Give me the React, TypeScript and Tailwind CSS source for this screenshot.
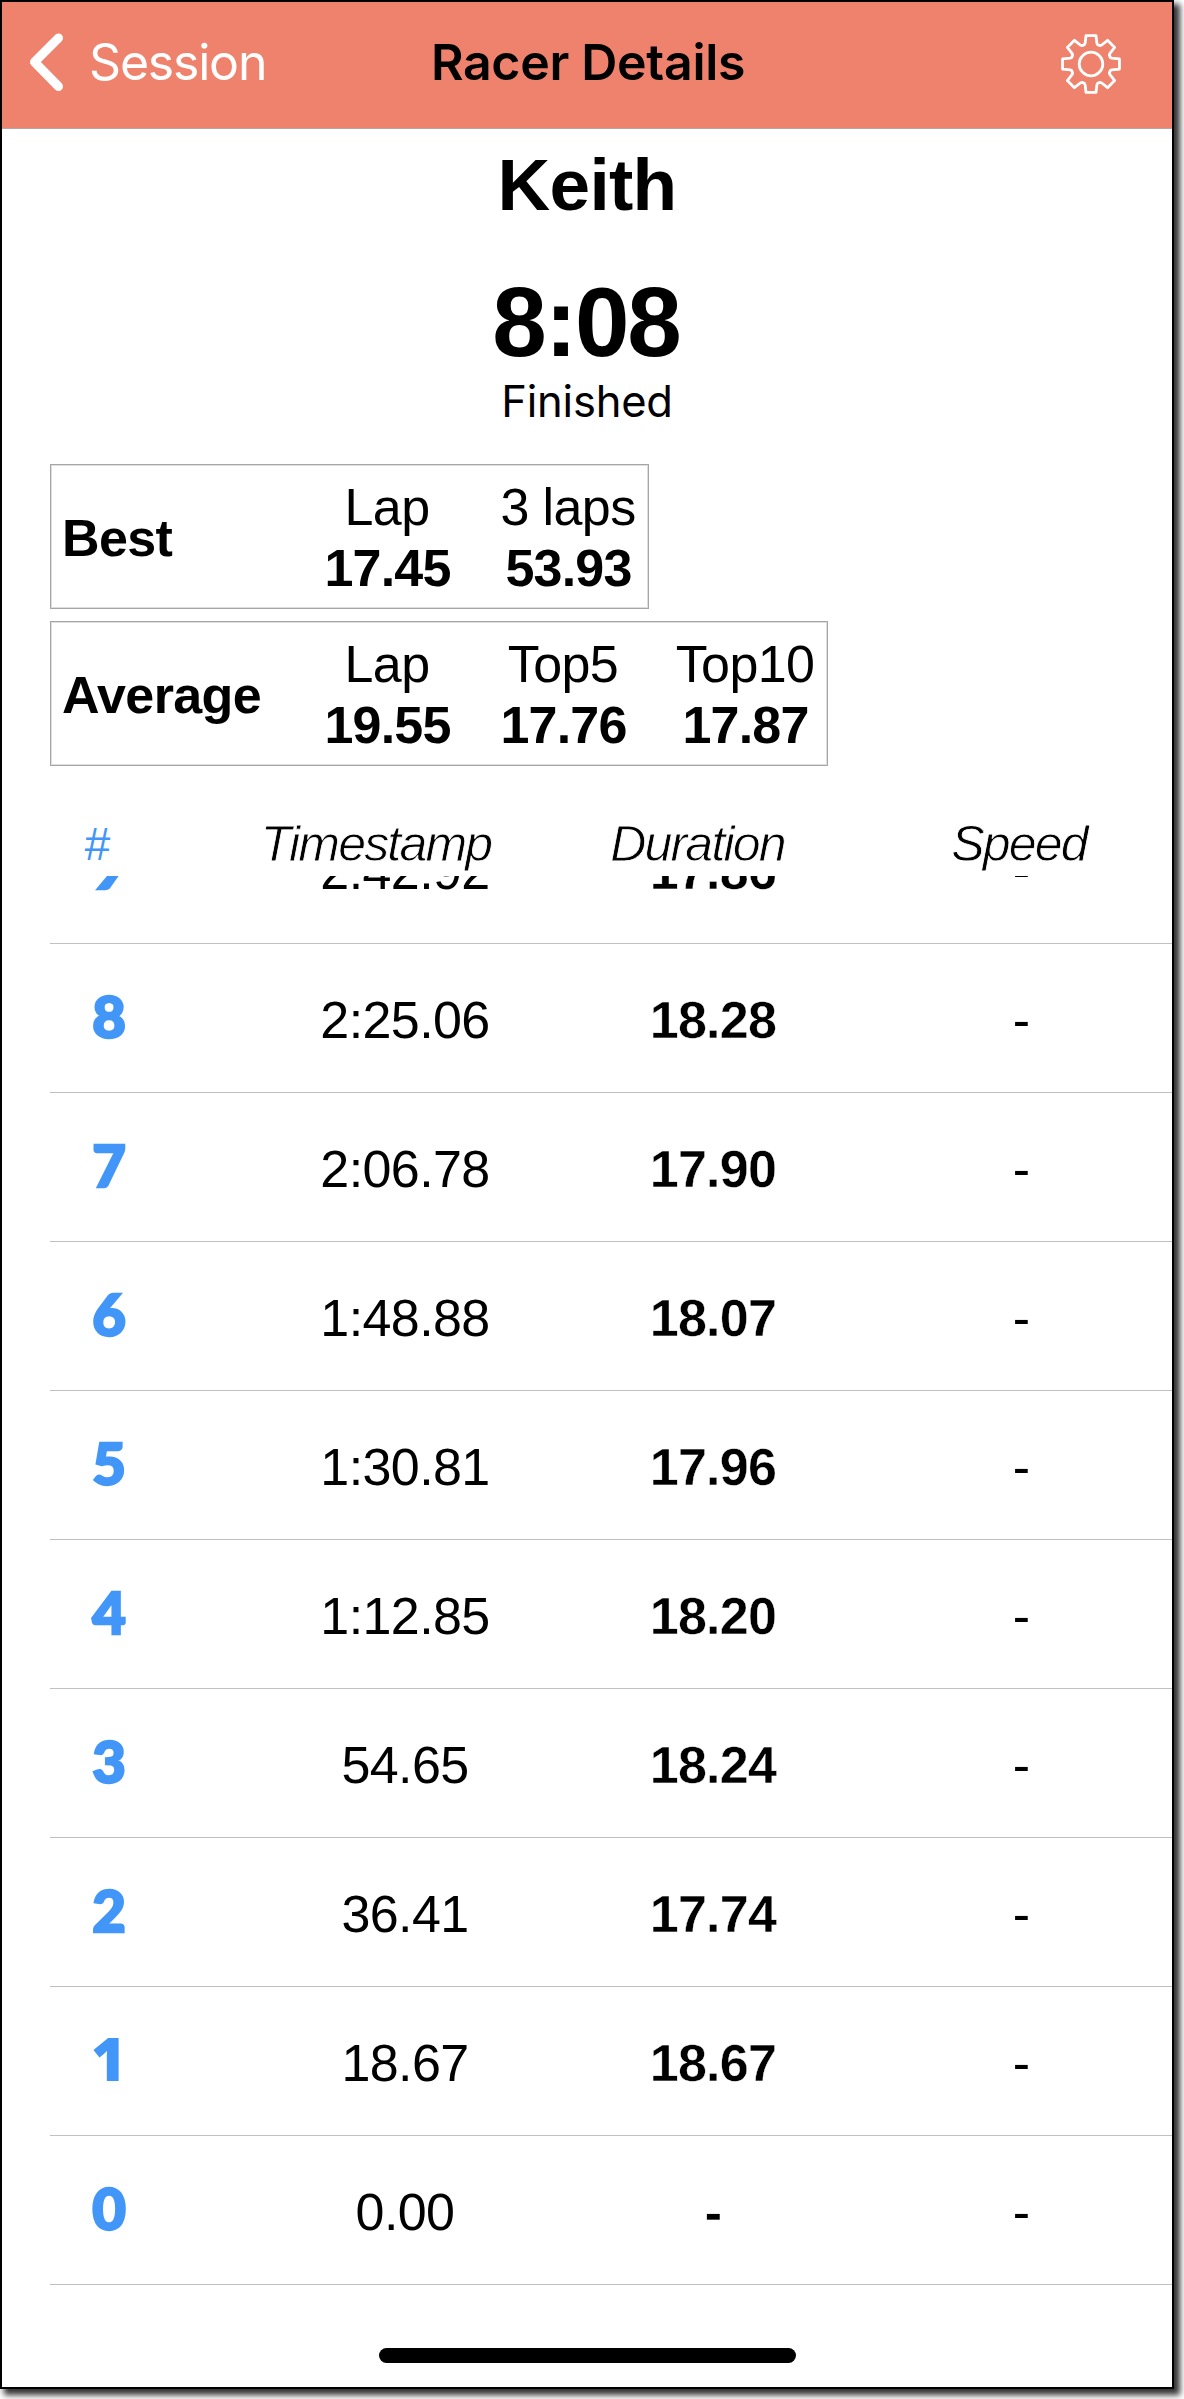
import React from "react";

const rows = [
  ["9", "2:42.92", "17.86", "-"],
  ["8", "2:25.06", "18.28", "-"],
  ["7", "2:06.78", "17.90", "-"],
  ["6", "1:48.88", "18.07", "-"],
  ["5", "1:30.81", "17.96", "-"],
  ["4", "1:12.85", "18.20", "-"],
  ["3", "54.65", "18.24", "-"],
  ["2", "36.41", "17.74", "-"],
  ["1", "18.67", "18.67", "-"],
  ["0", "0.00", "-", "-"],
];

// Outline of an eight-toothed gear centred in a 64x64 box.
const gearPath = (() => {
  const pts: string[] = [];
  for (let i = 0; i < 8; i++) {
    const a = i * 45;
    const p = (r: number, d: number) => {
      const t = ((a + d - 90) * Math.PI) / 180;
      return `${(32 + r * Math.cos(t)).toFixed(2)} ${(32 + r * Math.sin(t)).toFixed(2)}`;
    };
    pts.push(`${i ? "L" : "M"}${p(20.4, -19)} L${p(21.8, -15.5)} L${p(28.9, -10)} L${p(28.9, 10)} L${p(21.8, 15.5)} L${p(20.4, 19)}`);
  }
  return pts.join(" ") + "Z";
})();

function Stat({ label, value, className }: { label: string; value: string; className: string }) {
  return (
    <div className={`flex flex-col items-center whitespace-nowrap pt-[2px] ${className}`}>
      <div className="h-[60px] text-[52px] leading-[60px] tracking-[-0.6px]">{label}</div>
      <div className="h-[61px] pl-px text-[52px] font-bold leading-[62px] tracking-[-0.8px]">{value}</div>
    </div>
  );
}

export default function App() {
  return (
    <div className="h-[2399px] w-[1184px] overflow-hidden bg-white font-['Liberation_Sans',sans-serif] text-black">
      <div className="flex h-[2389px] w-[1174px] flex-col border-2 border-black bg-white shadow-[5px_5px_6px_1px_rgba(0,0,0,0.8)]">
        <header className="grid h-[127px] shrink-0 grid-cols-[1fr_auto_1fr] items-center border-b border-[#b9a5a0] bg-[#ef826d] font-['Inter',sans-serif]">
          <div className="flex items-center">
            <svg className="ml-[27px] mt-[-7px] h-[60px] w-[36px]" viewBox="0 0 36 60" fill="none" stroke="white" strokeWidth="9" strokeLinecap="round" strokeLinejoin="round">
              <path d="M29.5 6 L5.5 30 L29.5 54.5" />
            </svg>
            <span className="ml-[24px] mt-[-7px] text-[50px] leading-[60px] tracking-[-1.2px] text-white">Session</span>
          </div>
          <h1 className="mt-[-7px] pl-[2px] text-[50px] font-semibold leading-[60px] tracking-[-0.3px]">Racer Details</h1>
          <svg className="mr-[49px] mt-[-2px] justify-self-end" width="64" height="64" viewBox="0 0 64 64" fill="none" stroke="white" strokeWidth="2.8" strokeLinejoin="round">
            <path d={gearPath} />
            <circle cx="32" cy="32" r="11.8" />
          </svg>
        </header>

        <section className="flex h-[335px] shrink-0 flex-col items-center">
          <h2 className="mt-[14px] h-[84px] text-[73px] font-bold leading-[84px] tracking-[-0.7px]">Keith</h2>
          <div className="mt-[39px] h-[112px] pr-[2px] text-[98px] font-bold leading-[112px] tracking-[-2.2px]">8:08</div>
          <div className="mt-[-2px] h-[50px] font-['Inter',sans-serif] text-[43.5px] leading-[50px] tracking-[-0.2px]">Finished</div>
        </section>

        <section className="ml-[48px] flex shrink-0 flex-col items-start gap-3">
          <div className="flex h-[145px] w-[599px] items-center border border-[#a6a6a6] pl-[11px] shadow-[inset_0_0_0_1px_#dedede]">
            <div className="w-[260px] pt-[2px] text-[52px] font-bold tracking-[-0.6px]">Best</div>
            <Stat label="Lap" value="17.45" className="w-[130px]" />
            <Stat label="3 laps" value="53.93" className="ml-[49px] w-[134px]" />
          </div>
          <div className="flex h-[145px] w-[778px] items-center border border-[#a6a6a6] pl-[11px] shadow-[inset_0_0_0_1px_#dedede]">
            <div className="w-[260px] pt-[2px] text-[52px] font-bold tracking-[-0.6px]">Average</div>
            <Stat label="Lap" value="19.55" className="w-[130px]" />
            <Stat label="Top5" value="17.76" className="ml-[47px] w-[128px]" />
            <Stat label="Top10" value="17.87" className="ml-[50px] w-[136px]" />
          </div>
        </section>

        <div className="grid h-[110px] shrink-0 grid-cols-[94px_560px_83px_433px] pt-[49px] text-[50px] italic leading-[58px] tracking-[-1.8px] [-webkit-text-stroke:0.8px_white]">
          <div className="pl-[82px] text-[46px] text-[#4296f8] [-webkit-text-stroke:0px]">#</div>
          <div className="text-center">Timestamp</div>
          <div className="flex justify-center">Duration</div>
          <div className="pl-[127px] text-center">Speed</div>
        </div>

        <div className="ml-[48px] flex min-h-0 flex-1 flex-col overflow-hidden">
          <div className="mt-[-81px]">
            {rows.map(([lap, time, duration, speed]) => (
              <div key={lap} className="grid h-[149px] grid-cols-[117px_474px_144px_387px] items-start border-b border-[#c0c0c0] text-[52px] leading-[60px]">
                {lap === "1" ? (
                  <div className="pt-[38px] text-center font-['Open_Sans',sans-serif] text-[60px] font-extrabold leading-[66px] text-[#4296f8]">{lap}</div>
                ) : (
                  <div className="pl-px pt-[39px] text-center font-['Lato',sans-serif] text-[58px] font-black leading-[66px] text-[#4296f8] [-webkit-text-stroke:2.4px_#4296f8]">{lap}</div>
                )}
                <div className="pl-[2px] pt-[46px] text-center tracking-[-0.6px]">{time}</div>
                <div className="flex justify-center pt-[46px] font-bold tracking-[-0.7px] [-webkit-text-stroke:0.4px_white]">{duration}</div>
                <div className="pl-[86px] pt-[46px] text-center">{speed}</div>
              </div>
            ))}
          </div>
        </div>
        <div className="mb-[24px] ml-[377px] h-[15px] w-[417px] shrink-0 rounded-full bg-black" />
      </div>
    </div>
  );
}
